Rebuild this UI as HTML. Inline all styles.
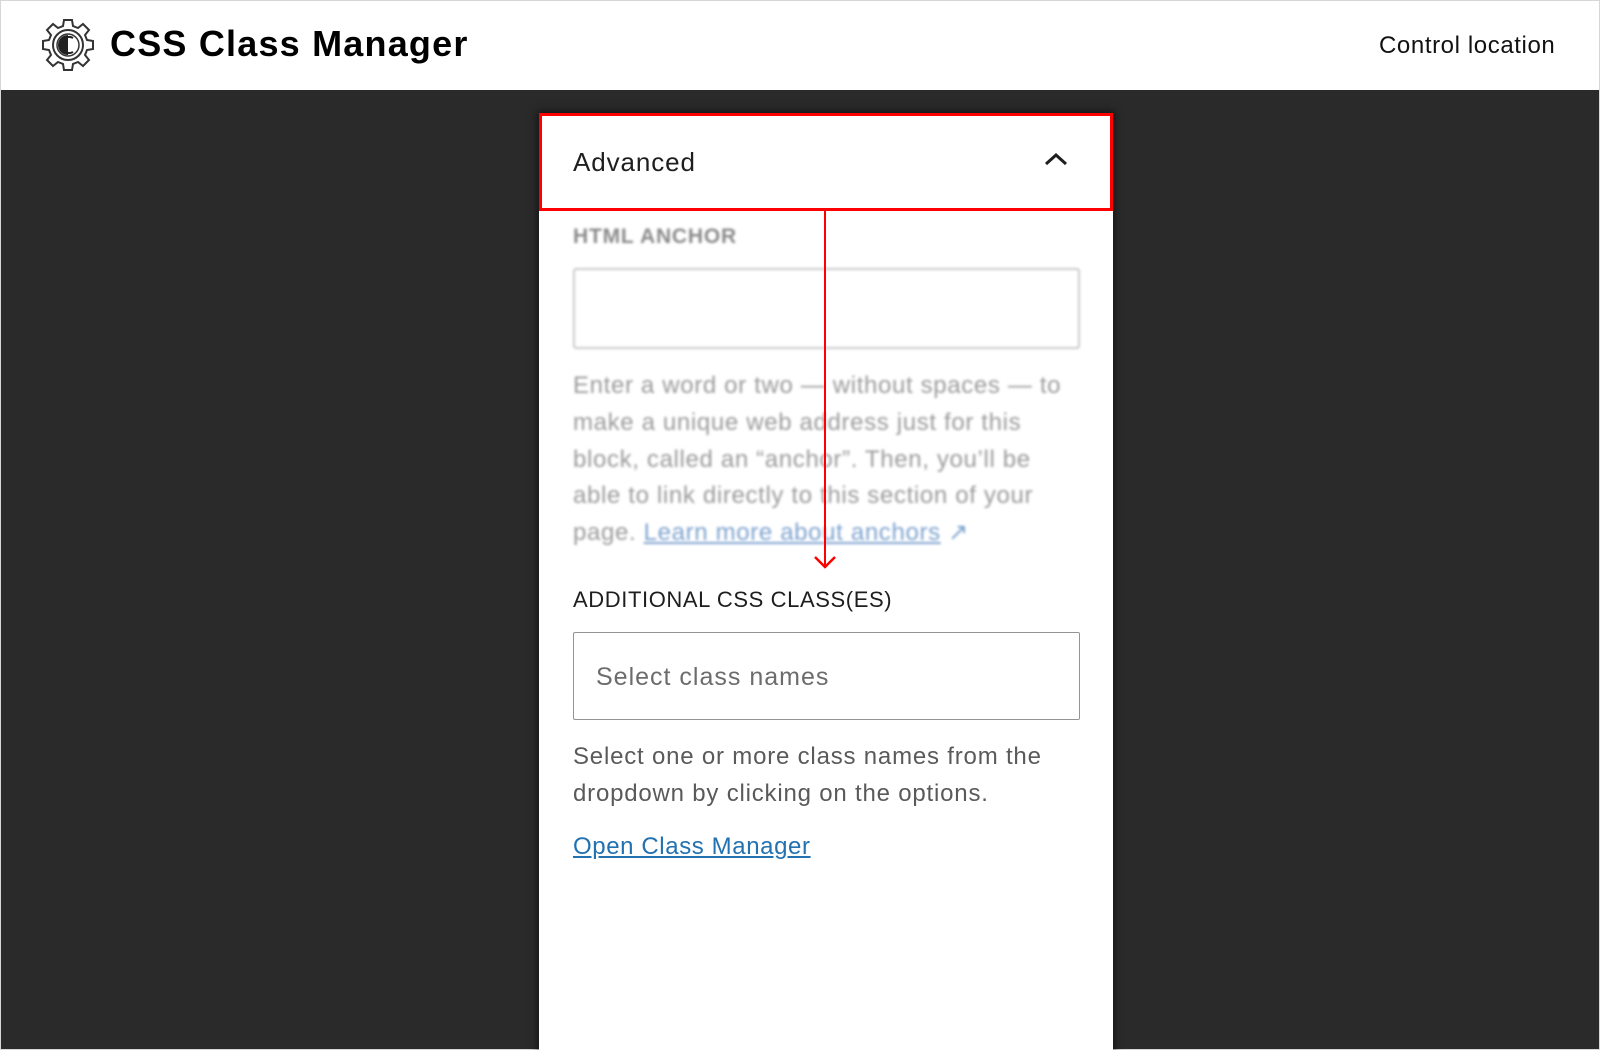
<!DOCTYPE html>
<html><head><meta charset="utf-8"><style>
*{margin:0;padding:0;box-sizing:border-box}
html,body{width:1600px;height:1050px;overflow:hidden;background:#2a2a2a;font-family:"Liberation Sans",sans-serif}
#page{position:relative;width:1600px;height:1050px;border:1px solid #d6d6d6;background:#2a2a2a}
#hdr{position:absolute;left:0;top:0;width:1598px;height:89px;background:#fff}
.t{position:absolute;white-space:nowrap}
#panel{position:absolute;left:538px;top:112px;width:574px;height:940px;background:#fff;box-shadow:0 0 8px 2px rgba(0,0,0,.5)}
#red{position:absolute;left:538px;top:112px;width:574px;height:98px;border:3px solid #f00}
.blur{filter:blur(1.2px)}
.gray{color:#9a9a9a}
</style></head><body><div id="page">
<div id="hdr">
<svg style="position:absolute;left:39px;top:16px" width="56" height="56" viewBox="0 0 56 56">
<path d="M24 3h8l1 6 5 2 5-4 6 6-4 5 2 5 6 1v8l-6 1-2 5 4 5-6 6-5-4-5 2-1 6h-8l-1-6-5-2-5 4-6-6 4-5-2-5-6-1v-8l6-1 2-5-4-5 6-6 5 4 5-2z" fill="none" stroke="#333" stroke-width="2"/>
<circle cx="28" cy="28" r="15" fill="none" stroke="#333" stroke-width="2"/>
<circle cx="28" cy="28" r="11" fill="none" stroke="#333" stroke-width="1.5"/>
<path d="M28 18a10 10 0 0 0 0 20z" fill="#222"/>
<path d="M33 21a8 8 0 1 0 0 14" fill="none" stroke="#222" stroke-width="2"/>
</svg>
<div class="t" style="left:109px;top:22px;font-size:36px;font-weight:bold;color:#000;letter-spacing:1.2px">CSS Class Manager</div>
<div class="t" style="left:1378px;top:31px;font-size:24px;color:#111;letter-spacing:0.6px">Control location</div>
</div>
<div id="panel"></div>
<div class="t" style="left:572px;top:146px;font-size:26px;color:#1e1e1e;letter-spacing:0.9px">Advanced</div>
<svg style="position:absolute;left:1042px;top:150px" width="26" height="16" viewBox="0 0 26 16"><path d="M3 13l10-9 10 9" fill="none" stroke="#1e1e1e" stroke-width="3"/></svg>
<div class="blur">
<div class="t gray" style="left:572px;top:224px;font-size:21px;font-weight:bold;color:#8a8a8a;letter-spacing:0.8px">HTML ANCHOR</div>
<div style="position:absolute;left:572px;top:267px;width:507px;height:81px;border:2px solid #c9c9c9;border-radius:3px"></div>
<div class="t gray" style="left:572px;top:367px;font-size:24px;line-height:36.8px;color:#9b9b9b;letter-spacing:0.65px">Enter a word or two — without spaces — to<br>make a unique web address just for this<br>block, called an “anchor”. Then, you’ll be<br>able to link directly to this section of your<br>page. <span style="color:#7ea3cf;text-decoration:underline">Learn more about anchors</span> <span style="color:#7ea3cf">↗</span></div>
</div>
<div class="t" style="left:572px;top:586px;font-size:22px;color:#1e1e1e;letter-spacing:0.6px">ADDITIONAL CSS CLASS(ES)</div>
<div style="position:absolute;left:572px;top:631px;width:507px;height:88px;border:1.5px solid #949494;border-radius:2px"></div>
<div class="t" style="left:595px;top:662px;font-size:25px;color:#6c6c6c;letter-spacing:1px">Select class names</div>
<div class="t" style="left:572px;top:738px;font-size:24px;line-height:36.8px;color:#5a5a5a;letter-spacing:0.8px">Select one or more class names from the<br>dropdown by clicking on the options.</div>
<div class="t" style="left:572px;top:832px;font-size:24px;color:#2271b1;text-decoration:underline;letter-spacing:0.6px">Open Class Manager</div>
<div style="position:absolute;left:823px;top:210px;width:2px;height:357px;background:#f00"></div>
<svg style="position:absolute;left:812px;top:553px" width="24" height="16" viewBox="0 0 24 16"><path d="M2 3l10 10 10-10" fill="none" stroke="#f00" stroke-width="2.5"/></svg>
<div id="red"></div>
</div></body></html>
